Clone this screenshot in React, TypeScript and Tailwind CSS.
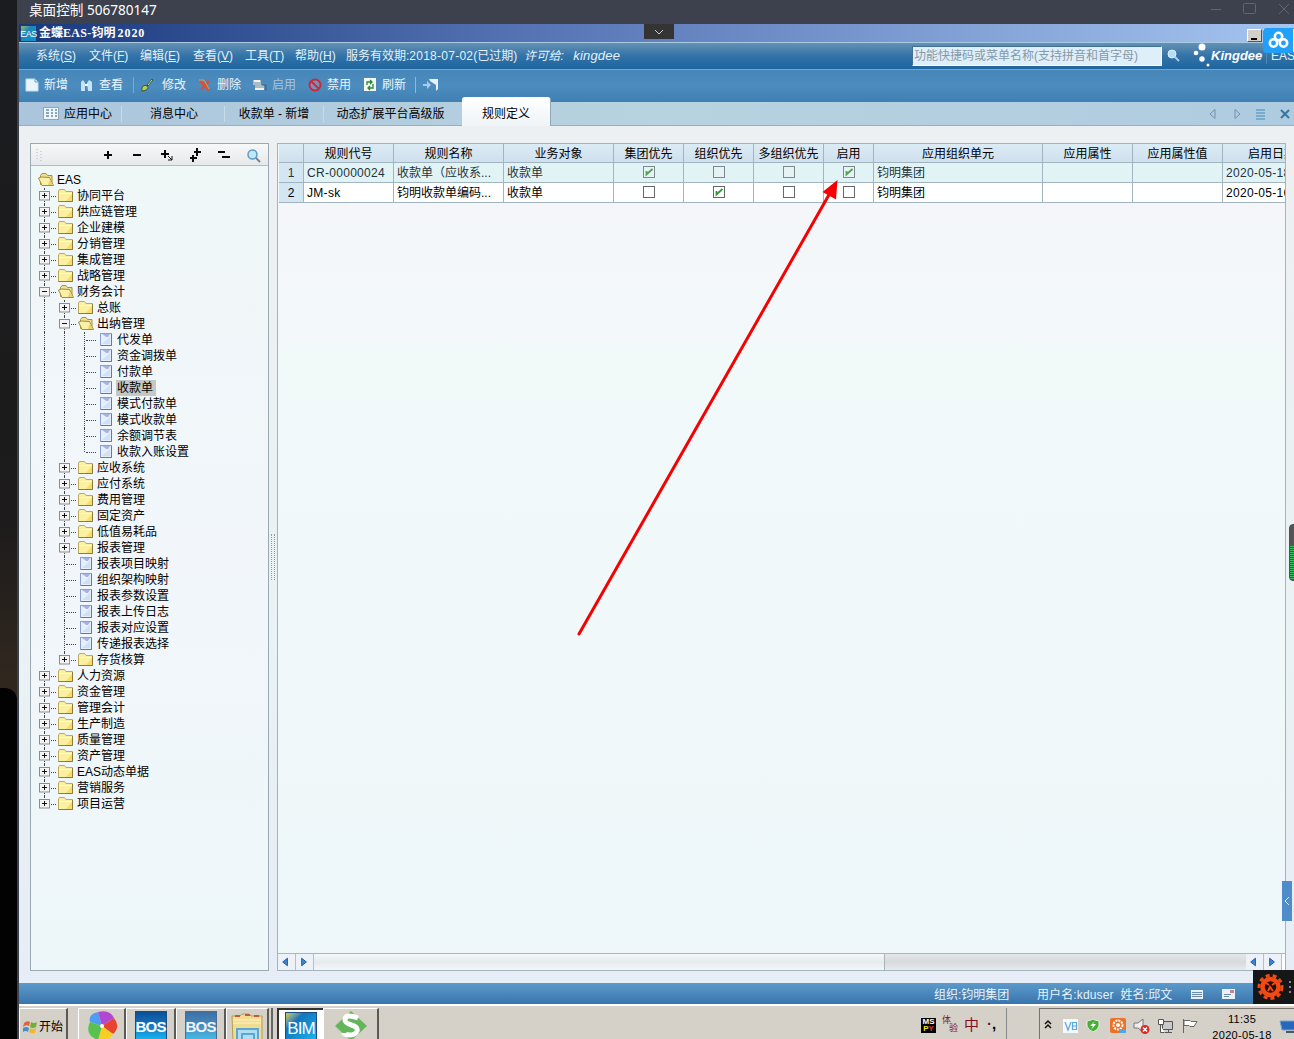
import React from 'react';

type Kind = 'open' | 'folder' | 'doc';
type Node = { t: string; l: number; k: Kind; e?: '+' | '-'; sel?: boolean; last?: boolean };

const f1 = (t: string): Node => ({ t, l: 1, k: 'folder', e: '+' });
const f2 = (t: string): Node => ({ t, l: 2, k: 'folder', e: '+' });
const d2 = (t: string): Node => ({ t, l: 2, k: 'doc' });
const d3 = (t: string): Node => ({ t, l: 3, k: 'doc' });

const nodes: Node[] = [
  f1('协同平台'), f1('供应链管理'), f1('企业建模'), f1('分销管理'), f1('集成管理'), f1('战略管理'),
  { t: '财务会计', l: 1, k: 'open', e: '-' },
  f2('总账'),
  { t: '出纳管理', l: 2, k: 'open', e: '-' },
  d3('代发单'), d3('资金调拨单'), d3('付款单'), { ...d3('收款单'), sel: true }, d3('模式付款单'), d3('模式收款单'), d3('余额调节表'),
  { ...d3('收款入账设置'), last: true },
  f2('应收系统'), f2('应付系统'), f2('费用管理'), f2('固定资产'), f2('低值易耗品'), f2('报表管理'),
  d2('报表项目映射'), d2('组织架构映射'), d2('报表参数设置'), d2('报表上传日志'), d2('报表对应设置'), d2('传递报表选择'),
  { ...f2('存货核算'), last: true },
  f1('人力资源'), f1('资金管理'), f1('管理会计'), f1('生产制造'), f1('质量管理'), f1('资产管理'), f1('EAS动态单据'), f1('营销服务'),
  { ...f1('项目运营'), last: true },
];

function TreeIcon({ k }: { k: Kind }) {
  if (k === 'doc')
    return (
      <svg width="16" height="16" viewBox="0 0 16 16" className="shrink-0">
        <rect x="2.500" y="1.500" width="11" height="12" fill="#e6effc" stroke="#8a9ed0" />
        <path d="M3 13.500h10.500V2" stroke="#6478a8" fill="none" />
        <path d="M4 2h8l-2 3H8L7 4z" fill="#a5b4e4" />
        <path d="M4 12L12 5v7z" fill="#cfe0f6" />
      </svg>
    );
  if (k === 'open')
    return (
      <svg width="16" height="16" viewBox="0 0 16 16" className="shrink-0">
        <path d="M2.500 12.500V3.500l1.500-2h4l1.500 2H14v9z" fill="#efe093" stroke="#a39245" />
        <path d="M4 13.500L.5 6l3-1 8 .5 4 8z" fill="#fbf0a8" stroke="#a08d3c" />
        <path d="M12 7l3 6h-5z" fill="#ecd06c" />
      </svg>
    );
  return (
    <svg width="16" height="16" viewBox="0 0 16 16" className="shrink-0">
      <path d="M.5 13.500V3l1-1.500h5l1.500 2h6.500v10z" fill="#fbf0a2" stroke="#bba95c" />
      <path d="M8 13l6-7v7z" fill="#f5dc70" />
      <path d="M1 5.500h13" stroke="#fffad0" />
      <path d="M.5 13.500h14V4" stroke="#8d7c36" fill="none" />
    </svg>
  );
}

const DOTV = 'border-l border-dotted border-[#444]';

function TreeRow({ n }: { n: Node }) {
  return (
    <div className="flex h-4 items-center whitespace-nowrap">
      {n.l >= 2 && <span className="h-4 w-5 shrink-0 pl-2.5"><span className={`block h-4 ${DOTV}`} /></span>}
      {n.l >= 3 && <span className="h-4 w-5 shrink-0 pl-2.5"><span className={`block h-4 ${DOTV}`} /></span>}
      <span className="relative h-4 w-6 shrink-0">
        <span className={`absolute left-2.5 top-0 ${n.last ? 'h-2' : 'h-4'} ${DOTV}`} />
        <span className="absolute left-3 right-0.5 top-2 border-t border-dotted border-[#444]" />
        {n.e && (
          <svg className="absolute left-[5px] top-[3px]" width="11" height="10" viewBox="0 0 11 10">
            <rect x=".5" y=".5" width="10" height="8.500" fill="#f4f4f4" stroke="#8c8c8c" />
            <path d={n.e === '+' ? 'M3 4.500h5M5.500 2v5' : 'M3 4.500h5'} stroke="#111" />
          </svg>
        )}
      </span>
      <TreeIcon k={n.k} />
      <span className={`ml-0.5 h-4 px-px leading-4 ${n.sel ? 'bg-[#c4c8c5] pr-[3px]' : ''}`}>{n.t}</span>
    </div>
  );
}

function Check({ on, dim }: { on?: boolean; dim?: boolean }) {
  return (
    <svg width="12" height="12" viewBox="0 0 12 12" className="mx-auto block">
      <rect x=".5" y=".5" width="11" height="11" fill={dim ? '#e6f3f5' : '#fff'} stroke={dim ? '#7c8a90' : '#66666e'} />
      {on && <path d="M3.500 5v3.500L9.500 3" stroke={dim ? '#4fa54c' : '#2f9e2b'} strokeWidth="1.800" fill="none" />}
    </svg>
  );
}

const menus: [string, string, string][] = [
  ['系统', 'S', 'w-[53px]'], ['文件', 'F', 'w-[51px]'], ['编辑', 'E', 'w-[53px]'], ['查看', 'V', 'w-[52px]'], ['工具', 'T', 'w-[50px]'], ['帮助', 'H', 'w-[51px]'],
];

const cols: [string, string][] = [
  ['', 'w-[25px]'], ['规则代号', 'w-[90px]'], ['规则名称', 'w-[110px]'], ['业务对象', 'w-[110px]'], ['集团优先', 'w-[70px]'], ['组织优先', 'w-[70px]'],
  ['多组织优先', 'w-[70px]'], ['启用', 'w-[50px]'], ['应用组织单元', 'w-[169px]'], ['应用属性', 'w-[90px]'], ['应用属性值', 'w-[90px]'], ['启用日期', 'w-[99px]'],
];

const rows = [
  ['1', 'CR-00000024', '收款单（应收系...', '收款单', 'y', 'n', 'n', 'y', '钧明集团', '', '', '2020-05-18'],
  ['2', 'JM-sk', '钧明收款单编码...', '收款单', 'n', 'y', 'n', 'n', '钧明集团', '', '', '2020-05-16'],
];

function Tri({ dir }: { dir: 'l' | 'r' }) {
  return (
    <svg width="18" height="16" viewBox="0 0 18 16" className="shrink-0 border-r border-[#b8bfc6] bg-[#edf2f8]">
      <path d={dir === 'l' ? 'M10 4v8L5 8z' : 'M6 4v8l5-4z'} fill="#3f86d8" stroke="#20559d" />
    </svg>
  );
}

function Task({ w, active, children }: { w: string; active?: boolean; children: React.ReactNode }) {
  return (
    <div className={`${w} flex h-[31px] shrink-0 items-start justify-center pt-[2px] ${active ? 'border-l-2 border-t-2 border-[#333] bg-white' : 'border-r-2 border-r-[#5c5a56] border-l border-l-white border-t border-t-white bg-[#d5d1c9]'}`}>
      {children}
    </div>
  );
}

function Bos({ t, faded }: { t: string; faded?: boolean }) {
  return (
    <div className={`flex h-[30px] w-8 items-center justify-center overflow-visible border border-[#174d82] text-[15px] font-bold tracking-tighter text-white ${t === 'BIM' ? 'bg-linear-to-br from-[#d5cc35] via-[#1474bb] via-30% to-[#18b8f0] pt-1 text-[17px] font-normal' : 'bg-linear-to-b from-[#0c4f97] via-[#1679c5] to-[#18b5ef] pt-0.5'} ${faded ? 'opacity-75' : ''}`}>
      {t}
    </div>
  );
}

function Tool({ w, label, dim, children }: { w: string; label: string; dim?: boolean; children: React.ReactNode }) {
  return (
    <div className={`${w} flex shrink-0 items-center`}>
      <svg width="16" height="16" viewBox="0 0 16 16" className="mr-1 shrink-0">{children}</svg>
      <span className={dim ? 'text-[#a5c4da]' : ''}>{label}</span>
    </div>
  );
}

export default function App() {
  return (
    <div className="relative flex h-[1039px] w-[1294px] overflow-hidden bg-[#17191e] text-xs text-black [font-family:'Liberation_Sans','Noto_Sans_CJK_SC',sans-serif]">
      <div className="flex w-[17px] shrink-0 flex-col bg-linear-to-b from-[#1a1c20] via-[#1d1b1b] via-50% to-[#30271f] to-65%">
        <div className="mt-[688px] flex-1 rounded-tr-xl bg-[#020203]" />
      </div>
      <div className="flex w-[1277px] flex-col bg-[#3d404d]">
        <div className="flex h-6 shrink-0 items-center pl-3 text-[13.600px] text-white [font-family:'Noto_Sans','Noto_Sans_CJK_SC',sans-serif]">
          <span className="-mt-1 flex-1 leading-5">桌面控制 506780147</span>
          <svg width="92" height="20" viewBox="0 0 92 20" fill="none" stroke="#626571" className="-mt-1.5">
            <path d="M9 10.500h10M77 5l10 10M87 5L77 15" /><rect x="41.500" y="4.500" width="12" height="10" rx="1" />
          </svg>
        </div>

        <div className="ml-0.5 flex h-[1015px] flex-col overflow-hidden">
          <div className="flex h-[18px] shrink-0 items-center bg-linear-to-r from-[#19397d] via-[#5674b4] via-40% to-[#a5c4ef] pl-0.5 text-white">
            <span className="mr-[3px] mt-px flex h-[15px] w-[15px] items-center justify-center bg-linear-to-br from-[#9ab931] via-[#1c88bb] via-35% to-[#1590ce] text-[9px] tracking-tighter">EAS</span>
            <span className="flex-1 text-[12px] font-bold [font-family:'Liberation_Serif','Noto_Sans_CJK_SC',serif]">金蝶<span className="tracking-[0.300px]">EAS-</span>钧明<span className="ml-0.5 tracking-[0.900px]">2020</span></span>
            <span className="mt-1 mr-px flex h-[13px] w-[15px] items-end border border-[#555] border-l-white border-t-white bg-[#d4d0c8] pb-px pl-[3px]"><span className="h-0.5 w-1.5 bg-black" /></span>
            <span className="mt-1 h-[13px] w-[31px] border border-[#555] border-l-white border-t-white bg-[#d4d0c8]" />
          </div>

          <div className="flex h-7 shrink-0 items-center border-b border-t border-b-[#71a9d0] border-t-[#a9cbe1] bg-linear-to-b from-[#6491b5] via-[#3273a8] via-50% to-[#1d659f] pl-[17px] text-[#e2f1fb]">
            {menus.map(([t, k, w]) => (
              <span key={t} className={`${w} shrink-0 whitespace-nowrap`}>{t}(<u>{k}</u>)</span>
            ))}
            <span className="w-[178px] shrink-0 whitespace-nowrap">服务有效期:<span className="tracking-[0.250px]">2018-07-02</span>(已过期)</span>
            <span className="w-[388px] shrink-0 whitespace-nowrap italic tracking-[0.200px]">许可给:&nbsp; <span className="ml-0.5 text-[13px]">kingdee</span></span>
            <span className="h-5 w-[250px] shrink-0 overflow-hidden whitespace-nowrap border border-l-[#416f97] border-t-[#416f97] border-b-white border-r-white bg-[#dfeffa] pl-px leading-[19px] text-[#8798a6]">功能快捷码或菜单名称(支持拼音和首字母)</span>
            <svg width="49" height="26" viewBox="0 0 49 26" className="shrink-0">
              <circle cx="10" cy="11" r="4" fill="#b6dcf6" stroke="#dff1fc" /><path d="M13 14l4 4" stroke="#a9cfe9" strokeWidth="2" />
              <g fill="#fff"><circle cx="40" cy="4" r="3.500" /><circle cx="34" cy="10" r="2.300" /><circle cx="40" cy="16" r="2.700" /><circle cx="46" cy="22" r="1.500" /></g>
            </svg>
            <span className="w-[55px] shrink-0 text-[13px] font-bold italic text-white">Kingdee</span>
            <span className="shrink-0 border-l border-[#5488b0] pl-1 text-[12px]">EAS</span>
          </div>

          <div className="flex h-8 shrink-0 items-center bg-linear-to-b from-[#4686b9] via-[#4d8cbe] to-[#407fb3] pb-[3px] pl-[5px] text-[#eaf6ff]">
            <Tool w="w-[55px]" label="新增"><path d="M2 2h9l3 3v9H2z" fill="#eaf5fd" stroke="#c0dff3" /><path d="M11 2v3h3" fill="none" stroke="#649cc4" /></Tool>
            <Tool w="w-[54px]" label="查看"><path d="M2 5l2-2 2 3v8H2zM8 6l2-3 3 2v9H9z" fill="#c7e4f6" /><path d="M6 8h3" stroke="#fff" strokeWidth="2" /></Tool>
            <span className="mr-1.5 h-4 border-l border-[#75aad0]" />
            <div className="flex w-[57px] shrink-0 items-center">
              <svg width="16" height="16" viewBox="0 0 16 16" className="mr-1.5"><path d="M7 8l5-6 1 1-5 6z" fill="#eef6e8" stroke="#315d33" /><path d="M2 14c-1-4 2-7 5-5s-1 5-5 5z" fill="#b5ca58" stroke="#364e2b" /></svg>
              修改
            </div>
            <Tool w="w-[55px]" label="删除"><path d="M3 4l9 9M12 4l-8 9" stroke="#d65234" strokeWidth="2.500" /><path d="M2 3h5l5 9" stroke="#e9945f" fill="none" /></Tool>
            <Tool w="w-[55px]" label="启用" dim><path d="M1 3h8v5h3v5H3V8H1z" fill="#a8bcc8" /><path d="M2 4h6M3 12h9" stroke="#f4f0e8" strokeWidth="2" /><path d="M10 8h4v6" stroke="#4b6173" fill="none" /></Tool>
            <Tool w="w-[55px]" label="禁用"><circle cx="8" cy="8" r="5.500" fill="#e7a1aa" fillOpacity=".3" stroke="#cf2638" strokeWidth="2" /><path d="M4 4l8 8" stroke="#cf2638" strokeWidth="2" /></Tool>
            <Tool w="w-[53px]" label="刷新"><rect x="2" y="1" width="12" height="13" fill="#f2f8f1" /><path d="M5 8V5h5M8 3l2 2-2 2M11 7v4H6M8 9l-2 2 2 2" stroke="#238b37" strokeWidth="1.300" fill="none" /></Tool>
            <span className="mr-1.5 h-4 border-l border-[#8cb8d9]" />
            <svg width="18" height="16" viewBox="0 0 18 16"><path d="M1 7h4V4l4 4-4 4V9H1z" fill="#aacbf0" /><path d="M7 2h9v10l-2 2V8L8 4z" fill="#e4f1fb" /></svg>
          </div>

          <div className="flex h-6 shrink-0 items-center border-b border-[#98afbd] bg-linear-to-r from-[#abc5dc] via-[#b7d3df] to-[#afcbe0]">
            <span className="flex w-[103px] shrink-0 items-center border-r border-[#c8dce7] pl-6">
              <svg width="16" height="13" viewBox="0 0 16 13" className="mr-[5px]"><rect x=".5" y=".5" width="15" height="12" fill="#eef6fa" stroke="#8ba7b7" /><path d="M3 3h3M3 6h3M3 9h3M8 3h2M8 6h2M8 9h2M12 3h2M12 6h2M12 9h2" stroke="#6690ad" strokeWidth="1.500" /></svg>
              应用中心
            </span>
            <span className="w-[103px] shrink-0 border-r border-[#c8dce7] pl-0.5 text-center">消息中心</span>
            <span className="w-[99px] shrink-0 border-r border-[#c8dce7] text-center">收款单 - 新增</span>
            <span className="w-[133px] shrink-0 text-center">动态扩展平台高级版</span>
            <span className="relative z-10 -mt-[5px] ml-[5px] h-[29px] w-[89px] shrink-0 rounded-t-[3px] border-r border-[#90a8b7] bg-linear-to-b from-white to-[#eef4f8] text-center leading-[34px]">规则定义</span>
            <span className="flex-1" />
            <svg width="88" height="20" viewBox="0 0 88 20" fill="none" stroke="#6e92a9">
              <path d="M9 5.500v9L4 10zM29 5.500v9l5-4.500z" /><path d="M50 6h9M50 9h9M50 12h9M50 15h9" stroke="#3f8cbd" /><path d="M75 6l8 8M83 6l-8 8" stroke="#34789f" strokeWidth="2" />
            </svg>
          </div>

          <div className="flex h-[857px] shrink-0 bg-linear-to-b from-[#edf0f3] via-[#e9f2f4] via-60% to-[#e6edf6] pl-[11px] pt-[17px]">
            <div className="flex h-[828px] w-[239px] shrink-0 flex-col border border-[#9ba9b2] bg-linear-to-b from-[#eff7f7] via-[#f2f6fb] to-[#edf7f9]">
              <div className="flex h-[22px] shrink-0 items-center border-b border-[#b4bcc2] bg-linear-to-b from-[#f7f8f8] to-[#e6e9eb]">
                <svg width="237" height="21" viewBox="0 0 237 21">
                  <path d="M6 5v12M10 7v12" stroke="#b2b8bc" strokeDasharray="1 2" />
                  <g stroke="#0a0a0a" strokeWidth="2" fill="none"><path d="M73 11h8M77 7v8M102 11h8M130 10h8M134 6v8M163 8h7M166 4v8M159 14h7M162 11v7M187 8h7M191 13h8" /></g>
                  <path d="M137 12l4 4m0-4v4h-4" stroke="#111" fill="none" />
                  <circle cx="221.500" cy="10.500" r="4.500" fill="#bfe8fa" stroke="#5d9ec4" strokeWidth="1.500" /><path d="M225 14l4 4" stroke="#708797" strokeWidth="2" />
                </svg>
              </div>
              <div className="pl-[3px] pt-1.5">
                <div className="flex h-4 items-center pl-1"><TreeIcon k="open" /><span className="ml-[3px] leading-4">EAS</span></div>
                {nodes.map((n) => <TreeRow key={n.t} n={n} />)}
              </div>
            </div>
            <div className="flex w-2 shrink-0 flex-col pt-[391px]">
              <span className="ml-0.5 h-[46px] w-1 border-x border-dotted border-[#8d9ba3]" />
            </div>
            <div className="flex h-[828px] w-[1009px] shrink-0 flex-col overflow-hidden border border-[#a3b4be] bg-linear-to-b from-[#f5f5f9] via-[#f2f9f9] via-25% to-[#eef7f9]">
              <div className="w-[1044px] shrink-0 pl-px">
                <div className="flex h-[19px] bg-linear-to-b from-[#dcecf5] to-[#cedfed]">
                  {cols.map(([t, w], i) => (
                    <span key={i} className={`${w} shrink-0 whitespace-nowrap border-b border-r border-[#a1b5c1] text-center leading-5`}>{t}</span>
                  ))}
                </div>
                {rows.map((r, ri) => (
                  <div key={ri} className={ri ? 'flex h-5 bg-white' : 'flex h-5 bg-[#e2f3f5] text-[#24343b]'}>
                    {r.map((v, i) => (
                      <span key={i} className={`${cols[i][1]} shrink-0 overflow-hidden whitespace-nowrap border-b border-r border-[#a1b5c1] leading-5 ${i === 0 ? 'bg-[#d3e6f1] text-center' : i > 3 && i < 8 ? 'pt-[3px]' : 'pl-[3px]'} ${i === 1 || i === 11 ? 'tracking-[0.300px]' : ''}`}>
                        {v === 'y' || v === 'n' ? <Check on={v === 'y'} dim={ri === 0} /> : v}
                      </span>
                    ))}
                  </div>
                ))}
              </div>
              <div className="flex-1" />
              <div className="flex h-[17px] shrink-0 border-t border-[#aab5be] bg-[#e0e2e4]">
                <Tri dir="l" /><Tri dir="r" />
                <span className="w-[571px] border-r border-[#a9b2ba] bg-linear-to-b from-[#f4f8fa] via-[#e5eaec] to-[#f2f7fa]" />
                <span className="flex-1 bg-linear-to-b from-[#e4e6e8] via-[#d7dadd] to-[#e8eaec]" />
                <Tri dir="l" /><Tri dir="r" /><span className="w-[3px] bg-white" />
              </div>
            </div>
          </div>

          <div className="flex h-[21px] shrink-0 items-center bg-linear-to-b from-[#5c9aca] to-[#3975ad] pl-[915px] pt-[3px] text-[#e7f3fb]">
            <span className="w-[103px] shrink-0">组织:钧明集团</span>
            <span className="w-[152px] shrink-0 whitespace-nowrap tracking-[0.120px]">用户名:kduser&nbsp; 姓名:邱文</span>
            <svg width="50" height="16" viewBox="0 0 50 16"><path d="M2 3h12v9H2zM33 2h13v10H33z" fill="#e8f1f8" /><path d="M3 5.500h10M3 7.500h10M3 9.500h10M35 7.500h7M35 9.500h5" stroke="#6b8cad" /><path d="M41 3h4v3h-4z" fill="#ca8190" /></svg>
          </div>

          <div className="flex h-[35px] shrink-0 border-t-2 border-white bg-[#d5d1c9] pt-0.5">
            <div className="mr-2.5 flex h-[31px] w-[49px] shrink-0 items-center border-l border-r-2 border-t border-l-white border-r-[#5c5a56] border-t-white pl-[3px] pt-1.5">
              <svg width="16" height="16" viewBox="0 0 16 16"><path d="M1 4q3-3 6-1l-1 4q-3-2-6 1z" fill="#de6439" /><path d="M8 3q3 2 6 0l-1 5q-3 2-6 0z" fill="#73af35" /><path d="M0 9q3-2 6 0l-1 4q-2-2-5 0z" fill="#438fd4" /><path d="M7 9q3 2 6 0l-1 5q-3 1-6-1z" fill="#f0b82d" /></svg>
              开始
            </div>
            <Task w="w-[48px]">
              <svg width="32" height="30" viewBox="0 0 32 30"><path d="M16 15L4 11Q2 3 12 1z" fill="#4e9df2" /><path d="M16 15L12 1q12-3 16 6z" fill="#b148d4" /><path d="M16 15l12-8q7 9-1 16z" fill="#e84430" /><path d="M16 15l11 8q-7 10-15 6z" fill="#f7ce22" /><path d="M16 15l-4 14Q-2 24 4 11z" fill="#59c24e" /><circle cx="16" cy="15" r="2" fill="#fff" /></svg>
            </Task>
            <Task w="w-[50px]"><Bos t="BOS" /></Task>
            <Task w="w-[50px]"><Bos t="BOS" faded /></Task>
            <Task w="w-[43px]">
              <svg width="34" height="30" viewBox="0 0 34 30"><path d="M2 5h8l2-2h7l2 2h11v25H3z" fill="#f2dc91" stroke="#b89b4e" /><path d="M5 5h5M15 4h5M24 5h5" stroke="#b85d42" strokeWidth="2" /><path d="M3 9h28M3 12h28" stroke="#fff3bd" /><path d="M7 30V18h21v12M12 30v-7h12v7" fill="#b0ddf2" stroke="#5aa8d2" strokeWidth="2" /></svg>
            </Task>
            <span className="ml-0.5 mr-1 w-[3px] border-x border-[#666]" />
            <Task w="w-[46px]" active><Bos t="BIM" /></Task>
            <Task w="w-[56px]">
              <svg width="34" height="30" viewBox="0 0 34 30"><path d="M1 15L17 0l16 15-16 15z" fill="#65b65a" /><path d="M24 7q-13-5-13 2c0 6 14 4 12 11-2 6-13 4-13 2" stroke="#fff" strokeWidth="5" fill="none" /></svg>
            </Task>
            <div className="ml-[542px] flex h-[31px] w-[86px] shrink-0 items-start border-r border-[#888] pt-2">
              <span className="mr-1.5 mt-0.5 flex h-[15px] w-[15px] shrink-0 flex-col items-center bg-black text-[8px] font-bold leading-[7px] text-white"><span>MS</span><span className="text-[#eee02d]">P<span className="text-[#e93b2b]">Y</span></span></span>
              <span className="mr-1.5 flex h-[17px] w-4 shrink-0 flex-col text-[9px] leading-[9px] text-[#82101c]"><span>体</span><span className="-mt-px self-end">验</span></span>
              <span className="text-[15px] leading-[18px] text-[#82101c]">中</span>
              <span className="ml-2 text-[15px] font-bold leading-[15px] text-[#6d1623]">·<span className="text-black">,</span></span>
            </div>
            <div className="ml-[32px] flex h-[31px] w-[260px] shrink-0 border-l border-t border-[#77736c]">
              <svg width="166" height="31" viewBox="0 0 166 31" className="shrink-0">
                <path d="M5 15l3-3 3 3M5 19l3-3 3 3" stroke="#111" strokeWidth="1.500" fill="none" />
                <rect x="23" y="10" width="15" height="14" fill="#f4f9fd" /><path d="M25 13l3 8 3-8M32.500 13.500h4v7h-4zM32.500 17h4" stroke="#5ba7dd" fill="none" strokeWidth="1.200" />
                <path d="M47 12q5-1 6-2 1 1 6 2v5q-1 4-6 6-5-2-6-6z" fill="#4cab3c" stroke="#e1f1dc" /><path d="M55 12l-5 5h3l-2 4 5-6h-3z" fill="#fff" />
                <rect x="70" y="9" width="16" height="15" rx="2" fill="#ed7228" /><circle cx="78" cy="16" r="4.500" fill="none" stroke="#fff" strokeWidth="2" strokeDasharray="2 1" /><circle cx="78" cy="16" r="2" fill="#fff" /><path d="M80 20h6v4h-6z" fill="#4ea7e9" />
                <path d="M94 14h4l5-4v13l-5-4h-4z" fill="#eee" stroke="#777" /><circle cx="105" cy="20.500" r="4.500" fill="#d72b27" /><path d="M103 18.500l4 4m0-4l-4 4" stroke="#fff" strokeWidth="1.500" />
                <path d="M122.500 12.500h10v8h-10zM125 23.500h7M128.500 20v3" fill="#c7c9ca" stroke="#555" /><path d="M118.500 10.500h5v5h-5zM120.500 16v7.500h4" fill="#fff" stroke="#555" />
                <path d="M143.500 10v14M144 11.500h6l1 1h6l-3 5h-4l-1-1h-5z" fill="#fff" stroke="#666" />
              </svg>
              <div className="w-[72px] shrink-0 pt-[2px] text-center text-[11px] leading-4 tracking-[0.300px]"><div>11:35</div><div className="whitespace-nowrap">2020-05-18</div></div>
              <svg width="18" height="31" viewBox="0 0 18 31"><path d="M2 12h16v9H4z" fill="#2767bd" stroke="#78a2c4" /><path d="M8 23h10" stroke="#4c5869" strokeWidth="2" /></svg>
            </div>
          </div>
        </div>
      </div>

      <div className="absolute left-[644px] top-6 flex h-[15px] w-[30px] items-center justify-center bg-[#343434]">
        <svg width="10" height="6" viewBox="0 0 10 6"><path d="M1 1l4 4 4-4" stroke="#ccc" fill="none" /></svg>
      </div>
      <div className="absolute left-[1263px] top-7 flex h-[25px] w-[31px] rounded-l bg-[#21a0f9] pl-[5px] pt-[3px]">
        <svg width="21" height="18" viewBox="0 0 21 18" fill="none" stroke="#fff" strokeWidth="2.500"><circle cx="10.500" cy="5.500" r="3.700" /><circle cx="5.500" cy="12" r="3.700" /><circle cx="15.500" cy="12" r="3.700" /></svg>
        <span className="-mt-0.5 ml-1 h-[23px] w-px bg-white" />
      </div>
      <svg className="absolute left-[570px] top-[175px]" width="275" height="465" viewBox="570 175 275 465">
        <path d="M579 634L830 193" stroke="#f80000" strokeWidth="3" strokeLinecap="round" /><path d="M837.500 180L822.500 192l13.500 7.500z" fill="#f80000" />
      </svg>
      <div className="absolute left-[1289px] top-[524px] h-[57px] w-[10px] overflow-hidden rounded border border-[#4c5552] bg-[#555]">
        <div className="mt-[21px] h-[35px] bg-[repeating-linear-gradient(#3ebd69_0_1px,#24633d_1px_2px)]" />
      </div>
      <div className="absolute left-[1282px] top-[881px] flex h-10 w-2.5 items-center justify-center bg-[#508cc9]">
        <svg width="6" height="10" viewBox="0 0 6 10"><path d="M5 1L1 5l4 4" stroke="#d9efff" fill="none" /></svg>
      </div>
      <div className="absolute left-[1253px] top-[970px] h-[34px] w-[41px] bg-[#141617]">
        <svg width="41" height="34" viewBox="0 0 41 34"><circle cx="17.500" cy="17" r="11.500" fill="none" stroke="#f24a12" strokeWidth="3" strokeDasharray="4 3" /><circle cx="17.500" cy="17" r="8" fill="#21100a" stroke="#f24a12" strokeWidth="4.500" /><path d="M13 13l3 2M22 13l-3 2M15 21l2-4 3 4" stroke="#f24a12" strokeWidth="2" fill="none" /><path d="M37 11v2M37 16v2M37 21v2" stroke="#888" strokeWidth="2" /></svg>
      </div>
    </div>
  );
}
